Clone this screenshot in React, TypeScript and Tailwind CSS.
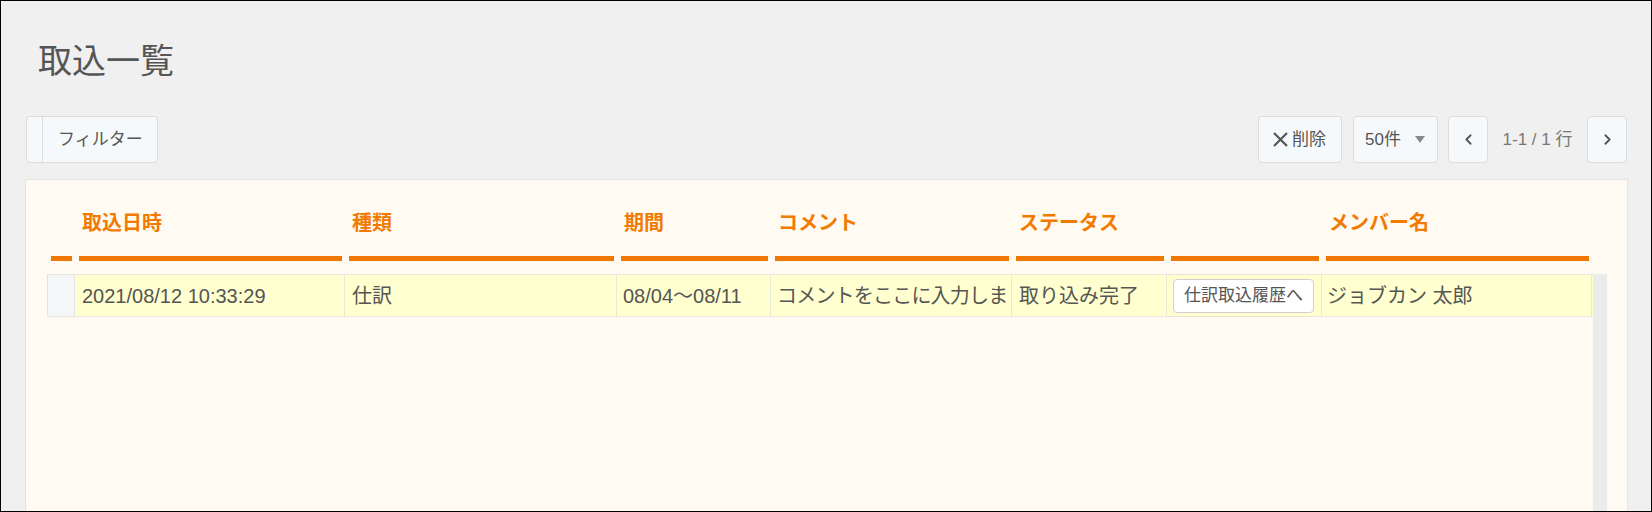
import { ChevronLeft, ChevronRight } from "lucide-react";

const COLS = "grid grid-cols-[28px_270px_272px_154px_241px_155px_155px_270px]";

const HEADERS = ["", "取込日時", "種類", "期間", "コメント", "ステータス", "", "メンバー名"];

function ToolButton({ children, className = "" }: { children: React.ReactNode; className?: string }) {
  return (
    <div
      className={`h-[47px] flex items-center rounded-[4px] border border-[#dcdcdc] bg-[#f6f9fc] text-[#555] ${className}`}
    >
      {children}
    </div>
  );
}

export default function App() {
  return (
    <div className="w-[1652px] h-[512px] overflow-hidden border border-black bg-[#f0f0f0] flex flex-col font-['Liberation_Sans','Noto_Sans_CJK_JP',sans-serif]">
      <h1 className="mt-[40px] ml-[37px] h-[40px] text-[34px] leading-[40px] text-[#555]">取込一覧</h1>

      {/* toolbar */}
      <div className="mt-[35px] ml-[25px] mr-[24px] h-[47px] flex items-center">
        <ToolButton className="w-[132px]">
          <div className="w-[16px] h-full border-r border-[#dcdcdc]" />
          <span className="pl-[15px] text-[17px] leading-none">フィルター</span>
        </ToolButton>

        <div className="ml-auto flex items-center">
          <ToolButton className="w-[84px] pl-[13px]">
            <svg width="17" height="17" viewBox="0 0 17 17" className="text-[#555]">
              <path d="M2 2 L15 15 M15 2 L2 15" stroke="currentColor" strokeWidth="2.2" fill="none" />
            </svg>
            <span className="ml-[3px] text-[17px] leading-none">削除</span>
          </ToolButton>

          <ToolButton className="ml-[11px] w-[85px] pl-[11px] pr-[12px] justify-between">
            <span className="text-[17px] leading-none">50件</span>
            <svg width="10" height="7" viewBox="0 0 10 7">
              <path d="M0 0 H10 L5 7 Z" fill="#8a8a8a" />
            </svg>
          </ToolButton>

          <ToolButton className="ml-[10px] w-[40px] justify-center">
            <ChevronLeft size={17} strokeWidth={2.6} className="text-[#555]" />
          </ToolButton>

          <span className="w-[99px] text-center text-[17px] leading-none text-[#777]">1-1 / 1 行</span>

          <ToolButton className="w-[40px] justify-center">
            <ChevronRight size={17} strokeWidth={2.6} className="text-[#555]" />
          </ToolButton>
        </div>
      </div>

      {/* panel */}
      <div className="mt-[16px] ml-[24px] mr-[23px] flex-1 border border-[#e4e4e4] bg-[#fffaf2] pl-[21px]">
        <div className={`${COLS} pt-[31px]`}>
          {HEADERS.map((h, i) => (
            <div key={i} className={i === 0 ? "pl-[4px] pr-[3px]" : "pl-[4px] pr-[3px]"}>
              <div className="h-[24px] pl-[3px] text-[20px] leading-[24px] font-bold text-[#f27a00] whitespace-nowrap">
                {h}
              </div>
              <div className="mt-[21px] h-[5px] bg-[#f07800]" />
            </div>
          ))}
        </div>

        <div className="mt-[13px] flex">
          <div className="w-[1546px]">
            <div className={`${COLS} h-[43px] border-y border-[#e6e6dc] text-[20px] text-[#555] bg-[#ffffcf]`}>
              <div className="bg-[#f5f6f8] border-x border-[#e3e3e3]" />
              <div className="flex items-center pl-[7px] border-r border-[#e8e8d6]">2021/08/12 10:33:29</div>
              <div className="flex items-center pl-[7px] border-r border-[#e8e8d6]">仕訳</div>
              <div className="flex items-center pl-[6px] border-r border-[#e8e8d6]">08/04～08/11</div>
              <div className="flex items-center pl-[6px] border-r border-[#e8e8d6] overflow-hidden whitespace-nowrap tracking-[-0.8px]">
                コメントをここに入力しま
              </div>
              <div className="flex items-center pl-[7px] border-r border-[#e8e8d6]">取り込み完了</div>
              <div className="flex items-center pl-[6px] border-r border-[#e8e8d6]">
                <div className="h-[34px] w-[141px] flex items-center justify-center rounded-[4px] border border-[#cfcfcf] bg-white text-[17px] leading-none">
                  仕訳取込履歴へ
                </div>
              </div>
              <div className="flex items-center pl-[5px] border-r border-[#e8e8d6]">ジョブカン 太郎</div>
            </div>
          </div>
          <div className="w-[14px] h-[260px] bg-[#ebebeb]" />
        </div>
      </div>
    </div>
  );
}
